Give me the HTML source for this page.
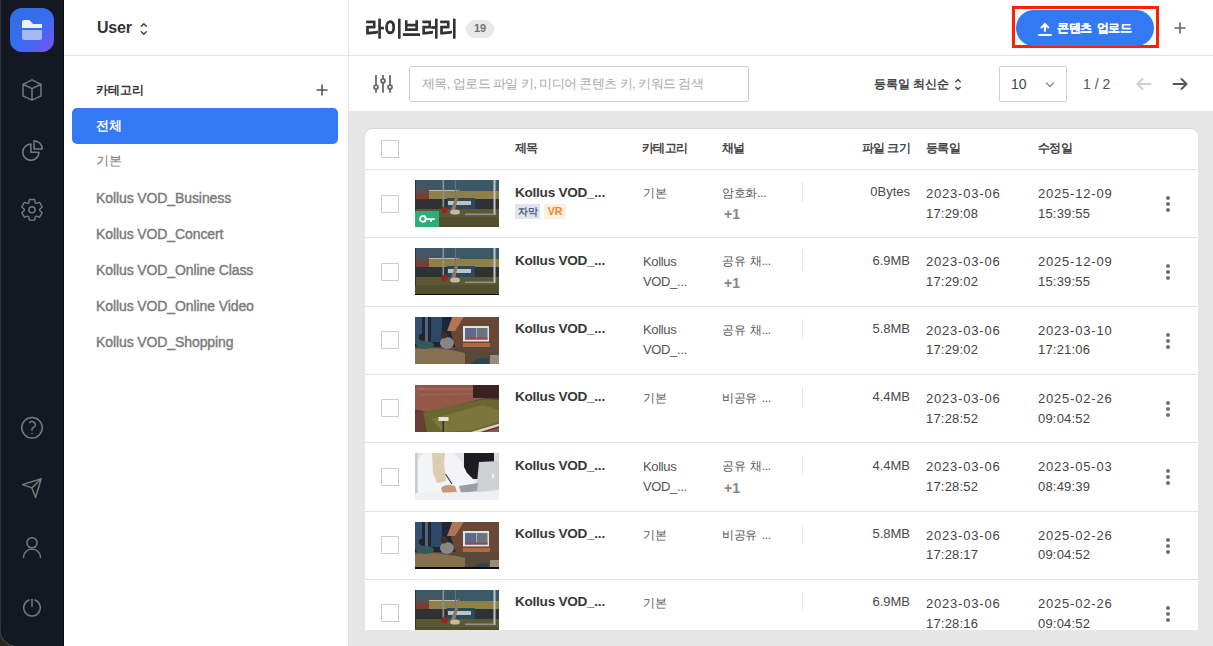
<!DOCTYPE html>
<html><head><meta charset="utf-8"><style>
*{box-sizing:border-box;margin:0;padding:0}
html,body{width:1213px;height:646px;overflow:hidden;background:#2b2a22}
body{font-family:"Liberation Sans",sans-serif;position:relative;color:#333}
.abs{position:absolute}
#win{position:absolute;left:0;top:0;width:1213px;height:646px;background:#fff;border-bottom-left-radius:16px;overflow:hidden}
#rail{position:absolute;left:0;top:0;width:64px;height:646px;background:#141823;border-right:1px solid #0b0e15}
#rail:before{content:"";position:absolute;left:0;top:0;width:1px;height:646px;background:#2d323d}
#logo{position:absolute;left:10px;top:8px;width:44px;height:44px;border-radius:12px;background:linear-gradient(135deg,#2f6fe6 0%,#3a6cf0 55%,#7b4ff5 100%)}
#side{position:absolute;left:64px;top:0;width:285px;height:646px;background:#fff;border-right:1px solid #e2e2e2}
#side .hd{position:absolute;left:0;top:0;width:284px;height:56px;border-bottom:1px solid #e4e4e4}
.user{position:absolute;left:33px;top:19px;font-size:16px;font-weight:bold;color:#333;letter-spacing:-0.2px}
.cathd{position:absolute;left:32px;top:82px;font-size:12px;font-weight:bold;color:#333}
.item{position:absolute;left:32px;font-size:14px;color:#7a7a7a;-webkit-text-stroke:0.4px #7a7a7a;letter-spacing:-0.1px}
.sel{position:absolute;left:8px;top:108px;width:266px;height:36px;border-radius:5px;background:#3379f3}
.sel span{position:absolute;left:24px;top:9.5px;font-size:12.5px;font-weight:bold;color:#fff}
#main{position:absolute;left:349px;top:0;width:864px;height:646px;background:#e6e6e6}
#mhd{position:absolute;left:0;top:0;width:864px;height:56px;background:#fff;border-bottom:1px solid #e4e4e4}
#tb{position:absolute;left:0;top:56px;width:864px;height:55px;background:#fff}
.ttl{position:absolute;left:16px;top:14px;font-size:19px;font-weight:bold;color:#333;letter-spacing:-0.5px;transform:scaleY(1.11);transform-origin:0 4px;-webkit-text-stroke:0.35px #333}
.badge{position:absolute;left:117px;top:20px;width:28px;height:18px;border-radius:9px;background:#e8e8e8;color:#707070;font-size:11px;font-weight:bold;text-align:center;line-height:16.5px}
.redbox{position:absolute;left:662.5px;top:5.8px;width:147.3px;height:42.6px;border:3px solid #ff2000}
.upl{position:absolute;left:667px;top:10px;width:138px;height:36px;border-radius:18px;background:#3379f3}
.upl span{position:absolute;left:41px;top:9.7px;font-size:12px;font-weight:bold;color:#fff;letter-spacing:-0.3px;word-spacing:1.5px;-webkit-text-stroke:0.15px #fff}
.search{position:absolute;left:60px;top:10px;width:340px;height:36px;border:1px solid #cfcfcf;border-radius:2px;background:#fff}
.search span{position:absolute;left:12px;top:7.6px;font-size:13px;color:#a8a8a8;letter-spacing:-0.6px}
.sort{position:absolute;left:525px;top:20px;font-size:12px;font-weight:bold;color:#444}
.sel10{position:absolute;left:650px;top:10px;width:68px;height:36px;border:1px solid #d2d2d2;border-radius:2px;background:#fff}
.sel10 span{position:absolute;left:11px;top:9px;font-size:14px;color:#444}
.pg{position:absolute;left:734px;top:20px;font-size:14px;color:#555}
#card{position:absolute;left:16px;top:128px;width:833px;height:502px;background:#fff;border-radius:8px 8px 0 0;overflow:hidden;border-top:1px solid #d6d6d6}
.th{position:absolute;top:11px;font-size:12px;font-weight:bold;color:#444;letter-spacing:-0.6px}
.hline{position:absolute;left:0;width:833px;height:1px;background:#e2e2e2}
.cb{position:absolute;width:18px;height:18px;border:1px solid #cdcdcd;border-radius:0;background:#fff}
.row{position:absolute;left:0;width:833px;height:68.333px}
.thumb{position:absolute;width:84px;height:47px;overflow:hidden}
.thumb svg{display:block}
.key{position:absolute;left:0;top:31px;width:24px;height:16px;background:#2bae78}
.key svg{display:block}
.title{position:absolute;left:150px;top:15.5px;font-size:13.6px;font-weight:bold;color:#383838;letter-spacing:-0.27px}
.tag{position:absolute;top:35px;height:15px;font-size:10.5px;font-weight:bold;line-height:15px;text-align:center}
.t1{left:150px;width:25px;background:#dfe5ef;color:#4a5a7a;font-size:9.5px}
.t2{left:179px;width:22px;background:#fdeedf;color:#f5841f}
.cat{position:absolute;left:278px;top:14.5px;font-size:13px;line-height:20px;color:#555;letter-spacing:-0.35px}
.ch{position:absolute;left:357px;top:16px;font-size:12px;color:#555;letter-spacing:-0.3px;word-spacing:1.5px}
.plus1{position:absolute;left:359px;top:37.2px;font-size:14px;font-weight:bold;color:#868686}
.vdiv{position:absolute;left:437px;top:13px;width:1px;height:20px;background:#e6e6e6}
.size{position:absolute;left:445px;width:100px;text-align:right;top:15.4px;font-size:13px;color:#4a4a4a}
.date{position:absolute;top:14.9px;font-size:13px;line-height:19.7px;color:#444;letter-spacing:0.8px}
.tm{letter-spacing:0.2px}
.dots{position:absolute;left:801px;top:27px;width:4px;height:16px}
.dots i{display:block;width:4px;height:4px;border-radius:2px;background:#707070;margin-bottom:2px}
svg.ic{position:absolute;overflow:visible}
.item.ko{font-size:12.5px;-webkit-text-stroke:0;color:#777}
.cat.ko{font-size:12px;top:14.2px;letter-spacing:-0.2px}

</style></head><body>
<div id="win">
<div id="rail">
  <div id="logo"><svg width="44" height="44" viewBox="0 0 44 44" style="position:absolute;left:0;top:0">
    <path d="M12 14.3 Q12 12 14 12 H19.5 L23 16 H32 V20 H12Z" fill="#eef2fb"/>
    <path d="M12 22 H32 V30 Q32 32 30 32 H14 Q12 32 12 30Z" fill="#a6b8f2"/>
  </svg></div>
  <svg class="ic" width="64" height="646" style="left:0;top:0" fill="none" stroke="#77787b" stroke-width="1.5" stroke-linecap="round" stroke-linejoin="round">
    <!-- cube -->
    <path d="M32 79.8 L23 84.3 V95.8 L32 100.2 L41 95.8 V84.3 Z M23 84.3 L32 88.6 L41 84.3 M32 88.6 V100.2"/>
    <!-- pie -->
    <g transform="translate(19.5 137.6) scale(1.082)"><path d="M10.5 6a7.5 7.5 0 1 0 7.5 7.5h-7.5V6Z"/><path d="M13.5 10.5H21A7.5 7.5 0 0 0 13.5 3v7.5Z"/></g>
    <!-- gear -->
    <path stroke-width="1.4" d="M28.70 202.80 L29.40 199.50 L34.60 199.50 L35.30 202.80 L36.41 203.44 L39.62 202.40 L42.22 206.90 L39.71 209.16 L39.71 210.44 L42.22 212.70 L39.62 217.20 L36.41 216.16 L35.30 216.80 L34.60 220.10 L29.40 220.10 L28.70 216.80 L27.59 216.16 L24.38 217.20 L21.78 212.70 L24.29 210.44 L24.29 209.16 L21.78 206.90 L24.38 202.40 L27.59 203.44Z"/><circle stroke-width="1.4" cx="32" cy="209.8" r="3.1"/>
    <!-- help -->
    <g transform="translate(18.33 414) scale(1.139)"><path stroke-width="1.32" d="M9.879 7.519c1.171-1.025 3.071-1.025 4.242 0 1.172 1.025 1.172 2.687 0 3.712-.203.179-.43.326-.67.442-.745.361-1.45.999-1.45 1.827v.75M21 12a9 9 0 1 1-18 0 9 9 0 0 1 18 0Zm-9 5.25h.008v.008H12v-.008Z"/></g>
    <!-- send -->
    <path d="M41.2 478.8 L31.9 487.9 M41.2 478.8 L35.6 497.5 L31.9 487.9 L22.5 484.6 Z"/>
    <!-- user -->
    <circle cx="32" cy="542.75" r="5.1"/>
    <path d="M23.5 557.5 A8.5 8.5 0 0 1 40.5 557.5"/>
    <!-- power -->
    <path d="M32 599.5 V606.5"/>
    <path d="M29 600.05 A8.3 8.3 0 1 0 35 600.05"/>
  </svg>
</div>
<div id="side">
  <div class="hd"></div>
  <div class="user">User</div>
  <svg class="ic" width="10" height="14" style="left:75px;top:22px" fill="none" stroke="#3e4a5c" stroke-width="1.5" stroke-linecap="round" stroke-linejoin="round"><path d="M2.3 4.3 L4.8 1.9 L7.3 4.3 M2.3 9.7 L4.8 12.1 L7.3 9.7"/></svg>
  <div class="cathd">카테고리</div>
  <svg class="ic" width="14" height="14" style="left:251px;top:82.8px" stroke="#555" stroke-width="1.6"><path d="M7 1.5V12.5M1.5 7H12.5"/></svg>
  <div class="sel"><span>전체</span></div>
  <div class="item ko" style="top:153px">기본</div>
  <div class="item" style="top:190px">Kollus VOD_Business</div>
  <div class="item" style="top:226px">Kollus VOD_Concert</div>
  <div class="item" style="top:262px">Kollus VOD_Online Class</div>
  <div class="item" style="top:298px">Kollus VOD_Online Video</div>
  <div class="item" style="top:334px">Kollus VOD_Shopping</div>
</div>
<div id="main">
  <div id="mhd">
    <div class="ttl">라이브러리</div>
    <div class="badge">19</div>
    <div class="redbox"></div>
    <div class="upl">
      <svg class="ic" width="16" height="16" style="left:22px;top:12px" fill="none" stroke="#fff" stroke-width="2.1" stroke-linejoin="miter"><path stroke-linecap="butt" d="M6.9 2.6V9.6"/><path stroke-linecap="round" d="M3.6 5.4L6.9 2.1 10.2 5.4"/><path d="M0.2 13H13.8" stroke-width="1.9"/></svg>
      <span>콘텐츠 업로드</span>
    </div>
    <svg class="ic" width="14" height="14" style="left:824px;top:21px" stroke="#666" stroke-width="1.6"><path d="M7 1.5V12.5M1.5 7H12.5"/></svg>
  </div>
  <div id="tb">
    <svg class="ic" width="24" height="24" style="left:22px;top:16px" fill="none" stroke="#6a6a6a" stroke-width="1.8"><path d="M5 3V13M5 17V20.8M12 3V6.8M12 10.8V20.8M19 3V13M19 17V20.8"/><circle cx="5" cy="15" r="1.95"/><circle cx="12" cy="8.8" r="1.95"/><circle cx="19" cy="15" r="1.95"/></svg>
    <div class="search"><span>제목, 업로드 파일 키, 미디어 콘텐츠 키, 키워드 검색</span></div>
    <div class="sort">등록일 최신순</div>
    <svg class="ic" width="10" height="14" style="left:604px;top:21px" fill="none" stroke="#4a4f5a" stroke-width="1.5" stroke-linecap="round" stroke-linejoin="round"><path d="M2.8 4.7 L5 2.5 L7.2 4.7 M2.8 10.2 L5 12.4 L7.2 10.2"/></svg>
    <div class="sel10"><span>10</span>
      <svg class="ic" width="10" height="8" style="left:45px;top:13.7px" fill="none" stroke="#8a93a3" stroke-width="1.5" stroke-linecap="round" stroke-linejoin="round"><path d="M1.5 2 L5 5.5 L8.5 2"/></svg>
    </div>
    <div class="pg">1 / 2</div>
    <svg class="ic" width="18" height="14" style="left:786px;top:21px" fill="none" stroke="#cfcfcf" stroke-width="1.9" stroke-linecap="round" stroke-linejoin="round"><path d="M15.5 7H2.5M7.5 2L2.5 7l5 5"/></svg>
    <svg class="ic" width="18" height="14" style="left:822px;top:21px" fill="none" stroke="#555" stroke-width="1.9" stroke-linecap="round" stroke-linejoin="round"><path d="M2.5 7H15.5M10.5 2L15.5 7l-5 5"/></svg>
  </div>
  <div id="card">
    <div class="cb" style="left:16px;top:11px"></div>
    <div class="th" style="left:150px">제목</div>
    <div class="th" style="left:277px">카테고리</div>
    <div class="th" style="left:357px">채널</div>
    <div class="th" style="left:445px;width:100px;text-align:right">파일 크기</div>
    <div class="th" style="left:561px">등록일</div>
    <div class="th" style="left:673px">수정일</div>
<div class="row" style="top:40.000px">
<div class="cb" style="left:16px;top:25.5px"></div>
<div class="thumb" style="left:50px;top:11px"><svg width="84" height="47" viewBox="0 0 84 47"><defs><filter id="bfield" x="-5%" y="-5%" width="110%" height="110%"><feGaussianBlur stdDeviation="0.6"/></filter></defs><g filter="url(#bfield)">
<rect x="-2" y="-2" width="88" height="51" fill="#4c5538"/>
<rect x="-2" y="-2" width="88" height="13" fill="#3b5869"/>
<path d="M0 6 L8 5 L20 5 L27 10 L27 13 L0 13Z" fill="#4a5258"/>
<rect x="14" y="10" width="28" height="3" fill="#b8bcc0"/>
<rect x="0" y="13" width="14" height="7" fill="#7e3a30"/>
<rect x="14" y="11" width="70" height="8" fill="#8f8046"/>
<rect x="0" y="19" width="84" height="11" fill="#2d3333"/>
<rect x="32" y="18" width="28" height="11" fill="#2b4a5e"/>
<rect x="33" y="21" width="23" height="4" fill="#bfc3c2"/>
<rect x="-2" y="29" width="88" height="20" fill="#5a5834"/>
<rect x="-2" y="37" width="88" height="12" fill="#52502e"/>
<rect x="27.5" y="0" width="1.6" height="29" fill="#8a9494"/>
<rect x="40" y="0" width="1" height="28" fill="#6a7474"/>
<rect x="78.5" y="0" width="2" height="35" fill="#c4c8c4"/>
<path d="M36 30 L43 9 L45 10 L40 30Z" fill="#8a7a62"/>
<circle cx="29.5" cy="30" r="3.2" fill="#8e2a22"/>
<ellipse cx="40" cy="32" rx="5" ry="2.6" fill="#c8b8a4"/>
<rect x="50" y="33.5" width="29" height="1.6" fill="#8e9288"/>
<rect x="0" y="-2" width="1" height="40" fill="#2a3030"/>
</g></svg>
<div class="key"><svg width="24" height="16" viewBox="0 0 24 16"><circle cx="7.9" cy="7.9" r="2.85" fill="none" stroke="#fff" stroke-width="1.9"/><path d="M10.5 8.05H19.8" stroke="#fff" stroke-width="1.8" fill="none"/><rect x="15" y="8" width="1.9" height="2.8" fill="#fff"/></svg></div>
</div>
<div class="title">Kollus VOD_...</div>
<div class="tag t1">자막</div><div class="tag t2">VR</div>
<div class="cat ko">기본</div>
<div class="ch">암호화...</div>
<div class="plus1">+1</div>
<div class="vdiv"></div>
<div class="size">0Bytes</div>
<div class="date" style="left:561px">2023-03-06<br><span class="tm">17:29:08</span></div>
<div class="date" style="left:673px">2025-12-09<br><span class="tm">15:39:55</span></div>
<div class="dots"><i></i><i></i><i></i></div>
</div>
<div class="row" style="top:108.333px">
<div class="cb" style="left:16px;top:25.5px"></div>
<div class="thumb" style="left:50px;top:11px"><svg width="84" height="47" viewBox="0 0 84 47"><defs><filter id="bfield" x="-5%" y="-5%" width="110%" height="110%"><feGaussianBlur stdDeviation="0.6"/></filter></defs><g filter="url(#bfield)">
<rect x="-2" y="-2" width="88" height="51" fill="#4c5538"/>
<rect x="-2" y="-2" width="88" height="13" fill="#3b5869"/>
<path d="M0 6 L8 5 L20 5 L27 10 L27 13 L0 13Z" fill="#4a5258"/>
<rect x="14" y="10" width="28" height="3" fill="#b8bcc0"/>
<rect x="0" y="13" width="14" height="7" fill="#7e3a30"/>
<rect x="14" y="11" width="70" height="8" fill="#8f8046"/>
<rect x="0" y="19" width="84" height="11" fill="#2d3333"/>
<rect x="32" y="18" width="28" height="11" fill="#2b4a5e"/>
<rect x="33" y="21" width="23" height="4" fill="#bfc3c2"/>
<rect x="-2" y="29" width="88" height="20" fill="#5a5834"/>
<rect x="-2" y="37" width="88" height="12" fill="#52502e"/>
<rect x="27.5" y="0" width="1.6" height="29" fill="#8a9494"/>
<rect x="40" y="0" width="1" height="28" fill="#6a7474"/>
<rect x="78.5" y="0" width="2" height="35" fill="#c4c8c4"/>
<path d="M36 30 L43 9 L45 10 L40 30Z" fill="#8a7a62"/>
<circle cx="29.5" cy="30" r="3.2" fill="#8e2a22"/>
<ellipse cx="40" cy="32" rx="5" ry="2.6" fill="#c8b8a4"/>
<rect x="50" y="33.5" width="29" height="1.6" fill="#8e9288"/>
<rect x="0" y="-2" width="1" height="40" fill="#2a3030"/>
</g></svg>
<div style="position:absolute;left:0;top:45.5px;width:84px;height:1.5px;background:#0e0e0e"></div>
</div>
<div class="title">Kollus VOD_...</div>
<div class="cat">Kollus<br>VOD_...</div>
<div class="ch">공유 채...</div>
<div class="plus1">+1</div>
<div class="vdiv"></div>
<div class="size">6.9MB</div>
<div class="date" style="left:561px">2023-03-06<br><span class="tm">17:29:02</span></div>
<div class="date" style="left:673px">2025-12-09<br><span class="tm">15:39:55</span></div>
<div class="dots"><i></i><i></i><i></i></div>
</div>
<div class="row" style="top:176.666px">
<div class="cb" style="left:16px;top:25.5px"></div>
<div class="thumb" style="left:50px;top:11px"><svg width="84" height="47" viewBox="0 0 84 47"><defs><filter id="bliving" x="-5%" y="-5%" width="110%" height="110%"><feGaussianBlur stdDeviation="0.6"/></filter></defs><g filter="url(#bliving)">
<rect x="-2" y="-2" width="88" height="51" fill="#3a3028"/>
<rect x="-2" y="-2" width="42" height="34" fill="#1e2838"/>
<rect x="0" y="0" width="7" height="27" fill="#34506e"/>
<rect x="10" y="0" width="3" height="30" fill="#5a6470"/>
<rect x="16" y="0" width="11" height="25" fill="#2e4a68"/>
<path d="M38 -2 L86 -2 L86 40 L44 40 L36 16Z" fill="#6a4630"/>
<path d="M38 -2 L50 -2 L40 14 L32 14Z" fill="#b07454"/>
<rect x="48" y="9" width="26" height="15.5" fill="#dde3ea"/>
<rect x="50" y="11" width="11" height="11.5" fill="#5a6a88"/>
<rect x="61.5" y="11" width="11" height="11.5" fill="#6a7480"/>
<rect x="50" y="20.5" width="22.5" height="2" fill="#b04040"/>
<rect x="48" y="26" width="27" height="4" fill="#b06a40"/>
<rect x="47" y="30" width="28" height="10" fill="#a08464"/>
<rect x="-2" y="30" width="88" height="19" fill="#5a4a38"/>
<path d="M-2 32 Q20 29 50 36 L50 49 L-2 49Z" fill="#86704f"/>
<ellipse cx="10" cy="28" rx="9" ry="4" fill="#345a5c"/>
<ellipse cx="32" cy="26" rx="7" ry="6" fill="#8a8684"/>
<circle cx="7" cy="20" r="3.2" fill="#2a2220"/>
<circle cx="29" cy="18" r="3.4" fill="#3e2e26"/>
<path d="M54 49 Q60 40 74 41 L74 49Z" fill="#2a4452"/>
<rect x="75" y="38" width="11" height="11" fill="#9a8a78"/>
</g></svg>
</div>
<div class="title">Kollus VOD_...</div>
<div class="cat">Kollus<br>VOD_...</div>
<div class="ch">공유 채...</div>
<div class="vdiv"></div>
<div class="size">5.8MB</div>
<div class="date" style="left:561px">2023-03-06<br><span class="tm">17:29:02</span></div>
<div class="date" style="left:673px">2023-03-10<br><span class="tm">17:21:06</span></div>
<div class="dots"><i></i><i></i><i></i></div>
</div>
<div class="row" style="top:244.999px">
<div class="cb" style="left:16px;top:25.5px"></div>
<div class="thumb" style="left:50px;top:11px"><svg width="84" height="47" viewBox="0 0 84 47"><defs><filter id="bstadium" x="-5%" y="-5%" width="110%" height="110%"><feGaussianBlur stdDeviation="0.6"/></filter></defs><g filter="url(#bstadium)">
<rect x="-2" y="-2" width="88" height="51" fill="#5a3a32"/>
<rect x="-2" y="-2" width="88" height="3" fill="#2a1a1a"/>
<path d="M-2 0 L58 0 L70 13 L14 27 L-2 24Z" fill="#94584a"/>
<path d="M2 3 L58 3 L58 5 L2 5Z" fill="#a06a5e"/>
<path d="M4 9 L62 8 L62 9.6 L4 10.6Z" fill="#9a6458"/>
<rect x="58" y="-2" width="28" height="15" fill="#3a2422"/>
<path d="M8 27 L70 14 L86 15 L86 38 L58 47 L10 47Z" fill="#6a6632"/>
<path d="M16 34 L68 20 L86 26 L86 36 L58 45 L28 47Z" fill="#7c763e"/>
<path d="M-2 27 L8 26 L12 49 L-2 49Z" fill="#6a3a30"/>
<rect x="23.5" y="32" width="10" height="4" fill="#eae6d6"/>
<rect x="27.5" y="36" width="1.4" height="12" fill="#2a2a22"/>
<path d="M56 47 L86 38 L86 40.5 L62 48Z" fill="#ddd4bc"/>
<path d="M64 49 L86 42 L86 49Z" fill="#8a5a4a"/>
</g></svg>
</div>
<div class="title">Kollus VOD_...</div>
<div class="cat ko">기본</div>
<div class="ch">비공유 ...</div>
<div class="vdiv"></div>
<div class="size">4.4MB</div>
<div class="date" style="left:561px">2023-03-06<br><span class="tm">17:28:52</span></div>
<div class="date" style="left:673px">2025-02-26<br><span class="tm">09:04:52</span></div>
<div class="dots"><i></i><i></i><i></i></div>
</div>
<div class="row" style="top:313.332px">
<div class="cb" style="left:16px;top:25.5px"></div>
<div class="thumb" style="left:50px;top:11px"><svg width="84" height="47" viewBox="0 0 84 47"><defs><filter id="boffice" x="-5%" y="-5%" width="110%" height="110%"><feGaussianBlur stdDeviation="0.6"/></filter></defs><g filter="url(#boffice)">
<rect x="-2" y="-2" width="88" height="51" fill="#e4e6ea"/>
<rect x="-2" y="-2" width="4.5" height="51" fill="#c8cccc"/>
<rect x="49" y="-2" width="30" height="28" fill="#1e1e20"/>
<rect x="79" y="-2" width="7" height="12" fill="#d8dadc"/>
<path d="M3 6 Q6 0 16 -1 L38 -1 L46 8 L52 20 L60 28 L58 36 L40 40 L6 44 L3 40Z" fill="#f3f4f8"/>
<path d="M17 -1 L30 -1 L29 10 L31 28 L22 30 L18 20Z" fill="#dccdb2"/>
<path d="M64 9 L84 8 L84 36 L61 40Z" fill="#cdd1d4"/>
<ellipse cx="78" cy="23" rx="1.2" ry="2.4" fill="#f4f4f4"/>
<path d="M44 33 L63 30 L62 38 L46 40Z" fill="#9a9ea2"/>
<path d="M26 35 Q30 30 40 33 L42 39 L28 41Z" fill="#c8987c"/>
<path d="M30.5 21 L37 31" stroke="#3a3a48" stroke-width="1.2"/>
<path d="M-2 40 L60 39 L84 38 L84 49 L-2 49Z" fill="#eef0f3"/>
</g></svg>
</div>
<div class="title">Kollus VOD_...</div>
<div class="cat">Kollus<br>VOD_...</div>
<div class="ch">공유 채...</div>
<div class="plus1">+1</div>
<div class="vdiv"></div>
<div class="size">4.4MB</div>
<div class="date" style="left:561px">2023-03-06<br><span class="tm">17:28:52</span></div>
<div class="date" style="left:673px">2023-05-03<br><span class="tm">08:49:39</span></div>
<div class="dots"><i></i><i></i><i></i></div>
</div>
<div class="row" style="top:381.665px">
<div class="cb" style="left:16px;top:25.5px"></div>
<div class="thumb" style="left:50px;top:11px"><svg width="84" height="47" viewBox="0 0 84 47"><defs><filter id="bliving" x="-5%" y="-5%" width="110%" height="110%"><feGaussianBlur stdDeviation="0.6"/></filter></defs><g filter="url(#bliving)">
<rect x="-2" y="-2" width="88" height="51" fill="#3a3028"/>
<rect x="-2" y="-2" width="42" height="34" fill="#1e2838"/>
<rect x="0" y="0" width="7" height="27" fill="#34506e"/>
<rect x="10" y="0" width="3" height="30" fill="#5a6470"/>
<rect x="16" y="0" width="11" height="25" fill="#2e4a68"/>
<path d="M38 -2 L86 -2 L86 40 L44 40 L36 16Z" fill="#6a4630"/>
<path d="M38 -2 L50 -2 L40 14 L32 14Z" fill="#b07454"/>
<rect x="48" y="9" width="26" height="15.5" fill="#dde3ea"/>
<rect x="50" y="11" width="11" height="11.5" fill="#5a6a88"/>
<rect x="61.5" y="11" width="11" height="11.5" fill="#6a7480"/>
<rect x="50" y="20.5" width="22.5" height="2" fill="#b04040"/>
<rect x="48" y="26" width="27" height="4" fill="#b06a40"/>
<rect x="47" y="30" width="28" height="10" fill="#a08464"/>
<rect x="-2" y="30" width="88" height="19" fill="#5a4a38"/>
<path d="M-2 32 Q20 29 50 36 L50 49 L-2 49Z" fill="#86704f"/>
<ellipse cx="10" cy="28" rx="9" ry="4" fill="#345a5c"/>
<ellipse cx="32" cy="26" rx="7" ry="6" fill="#8a8684"/>
<circle cx="7" cy="20" r="3.2" fill="#2a2220"/>
<circle cx="29" cy="18" r="3.4" fill="#3e2e26"/>
<path d="M54 49 Q60 40 74 41 L74 49Z" fill="#2a4452"/>
<rect x="75" y="38" width="11" height="11" fill="#9a8a78"/>
</g></svg>
<div style="position:absolute;left:0;top:45.5px;width:84px;height:1.5px;background:#0e0e0e"></div>
</div>
<div class="title">Kollus VOD_...</div>
<div class="cat ko">기본</div>
<div class="ch">비공유 ...</div>
<div class="vdiv"></div>
<div class="size">5.8MB</div>
<div class="date" style="left:561px">2023-03-06<br><span class="tm">17:28:17</span></div>
<div class="date" style="left:673px">2025-02-26<br><span class="tm">09:04:52</span></div>
<div class="dots"><i></i><i></i><i></i></div>
</div>
<div class="row" style="top:449.998px">
<div class="cb" style="left:16px;top:25.5px"></div>
<div class="thumb" style="left:50px;top:11px"><svg width="84" height="47" viewBox="0 0 84 47"><defs><filter id="bfield" x="-5%" y="-5%" width="110%" height="110%"><feGaussianBlur stdDeviation="0.6"/></filter></defs><g filter="url(#bfield)">
<rect x="-2" y="-2" width="88" height="51" fill="#4c5538"/>
<rect x="-2" y="-2" width="88" height="13" fill="#3b5869"/>
<path d="M0 6 L8 5 L20 5 L27 10 L27 13 L0 13Z" fill="#4a5258"/>
<rect x="14" y="10" width="28" height="3" fill="#b8bcc0"/>
<rect x="0" y="13" width="14" height="7" fill="#7e3a30"/>
<rect x="14" y="11" width="70" height="8" fill="#8f8046"/>
<rect x="0" y="19" width="84" height="11" fill="#2d3333"/>
<rect x="32" y="18" width="28" height="11" fill="#2b4a5e"/>
<rect x="33" y="21" width="23" height="4" fill="#bfc3c2"/>
<rect x="-2" y="29" width="88" height="20" fill="#5a5834"/>
<rect x="-2" y="37" width="88" height="12" fill="#52502e"/>
<rect x="27.5" y="0" width="1.6" height="29" fill="#8a9494"/>
<rect x="40" y="0" width="1" height="28" fill="#6a7474"/>
<rect x="78.5" y="0" width="2" height="35" fill="#c4c8c4"/>
<path d="M36 30 L43 9 L45 10 L40 30Z" fill="#8a7a62"/>
<circle cx="29.5" cy="30" r="3.2" fill="#8e2a22"/>
<ellipse cx="40" cy="32" rx="5" ry="2.6" fill="#c8b8a4"/>
<rect x="50" y="33.5" width="29" height="1.6" fill="#8e9288"/>
<rect x="0" y="-2" width="1" height="40" fill="#2a3030"/>
</g></svg>
</div>
<div class="title">Kollus VOD_...</div>
<div class="cat ko">기본</div>
<div class="vdiv"></div>
<div class="size">6.9MB</div>
<div class="date" style="left:561px">2023-03-06<br><span class="tm">17:28:16</span></div>
<div class="date" style="left:673px">2025-02-26<br><span class="tm">09:04:52</span></div>
<div class="dots"><i></i><i></i><i></i></div>
</div><div class="hline" style="top:40.000px"></div><div class="hline" style="top:108.333px"></div><div class="hline" style="top:176.666px"></div><div class="hline" style="top:244.999px"></div><div class="hline" style="top:313.332px"></div><div class="hline" style="top:381.665px"></div><div class="hline" style="top:449.998px"></div>
  </div>
</div>
</div>

</body></html>
